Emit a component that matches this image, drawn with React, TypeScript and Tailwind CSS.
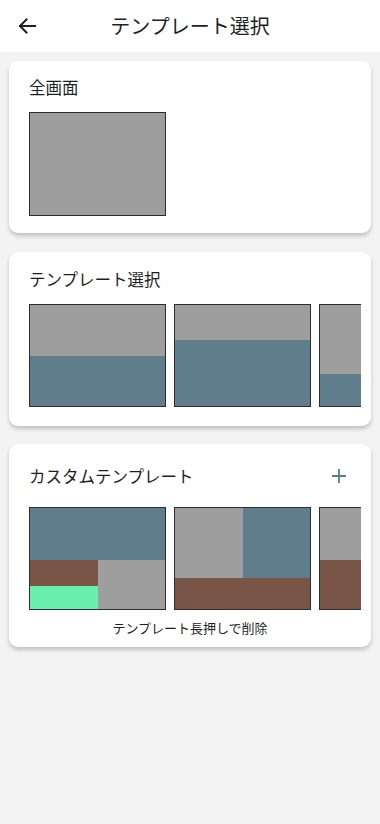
import { useState } from "react";

const GRAY = "bg-[#9e9e9e]";
const BLUE = "bg-[#607d8b]";
const BROWN = "bg-[#795548]";
const GREEN = "bg-[#69f0ae]";

const Thumb = ({ children }: { children: React.ReactNode }) => {
  return (
    <div className="w-[137px] h-[103px] shrink-0 border border-[#2e2e2e] flex flex-col overflow-hidden">
      {children}
    </div>
  );
};

const BackArrow = () => (
  <svg width="18" height="16" viewBox="0 0 18 16" fill="none">
    <path
      d="M17 8H2M8.5 1.5L2 8l6.5 6.5"
      stroke="#1f1f1f"
      strokeWidth="2"
      strokeLinecap="square"
    />
  </svg>
);

const PlusIcon = () => (
  <svg width="14" height="14" viewBox="0 0 14 14" fill="none">
    <path d="M7 0v14M0 7h14" stroke="#4e8580" strokeWidth="1.8" />
  </svg>
);

const App = () => {
  const [selected, setSelected] = useState<number | null>(null);
  // 選択されたテンプレート
  console.log(selected);

  return (
    <div
      className="w-[380px] min-h-[824px] bg-[#f3f3f3] text-[#1f1f1f]"
      style={{ fontFamily: '"Noto Sans CJK JP", "Noto Sans", sans-serif' }}
    >
      <header className="h-[52px] bg-white flex items-center relative">
        <button className="w-[52px] h-[52px] flex items-center justify-center pl-[1px] pb-[1px]">
          <BackArrow />
        </button>
        <h1 className="absolute left-0 right-0 text-center text-[20px] leading-[52px] pb-[1px] pointer-events-none">
          テンプレート選択
        </h1>
      </header>

      <div className="flex flex-col gap-[19px] px-[9px] pt-[9px]">
        {/* 全画面 */}
        <section className="bg-white rounded-[9px] shadow-[0_3px_4px_rgba(0,0,0,0.2)] pl-[20px] pr-[10px] pt-[15px] pb-[17px]">
          <h2 className="text-[16.5px] leading-[22px] mb-[14px]">全画面</h2>
          <div onClick={() => setSelected(0)} className="w-[137px] h-[104px] border border-[#2e2e2e] bg-[#9e9e9e]" />
        </section>

        {/* テンプレート選択 */}
        <section className="bg-white rounded-[9px] shadow-[0_3px_4px_rgba(0,0,0,0.2)] pl-[20px] pr-[10px] pt-[16px] pb-[19px]">
          <h2 className="text-[16.5px] leading-[22px] mb-[14px]">テンプレート選択</h2>
          <div className="flex gap-[8px] overflow-hidden">
            <Thumb>
              <div className={`h-[51px] ${GRAY}`} />
              <div className={`flex-1 ${BLUE}`} />
            </Thumb>
            <Thumb>
              <div className={`h-[35px] ${GRAY}`} />
              <div className={`flex-1 ${BLUE}`} />
            </Thumb>
            <Thumb>
              <div className={`h-[69px] ${GRAY}`} />
              <div className={`flex-1 ${BLUE}`} />
            </Thumb>
          </div>
        </section>

        {/* カスタムテンプレート */}
        <section className="bg-white rounded-[9px] shadow-[0_3px_4px_rgba(0,0,0,0.2)] pl-[20px] pr-[10px] pt-[8px] pb-[9px] -mt-[1px]">
          <div className="h-[48px] flex items-center justify-between mb-[7px]">
            <h2 className="text-[16.5px] leading-[22px]">カスタムテンプレート</h2>
            <button className="w-[40px] h-[40px] flex items-center justify-center mr-[2px]">
              <PlusIcon />
            </button>
          </div>
          <div className="flex gap-[8px] overflow-hidden">
            <Thumb>
              <div className={`h-[52px] ${BLUE}`} />
              <div className="flex flex-1">
                <div className="w-1/2 flex flex-col">
                  <div className={`h-[26px] ${BROWN}`} />
                  <div className={`flex-1 ${GREEN}`} />
                </div>
                <div className={`w-1/2 ${GRAY}`} />
              </div>
            </Thumb>
            <Thumb>
              <div className="flex h-[70px]">
                <div className={`w-1/2 ${GRAY}`} />
                <div className={`w-1/2 ${BLUE}`} />
              </div>
              <div className={`flex-1 ${BROWN}`} />
            </Thumb>
            <Thumb>
              <div className={`h-[52px] ${GRAY}`} />
              <div className={`flex-1 ${BROWN}`} />
            </Thumb>
          </div>
          <p className="text-center text-[13px] leading-[20px] mt-[8px] pr-[10px]">
            テンプレート長押しで削除
          </p>
        </section>
      </div>
    </div>
  );
};

export default App;
